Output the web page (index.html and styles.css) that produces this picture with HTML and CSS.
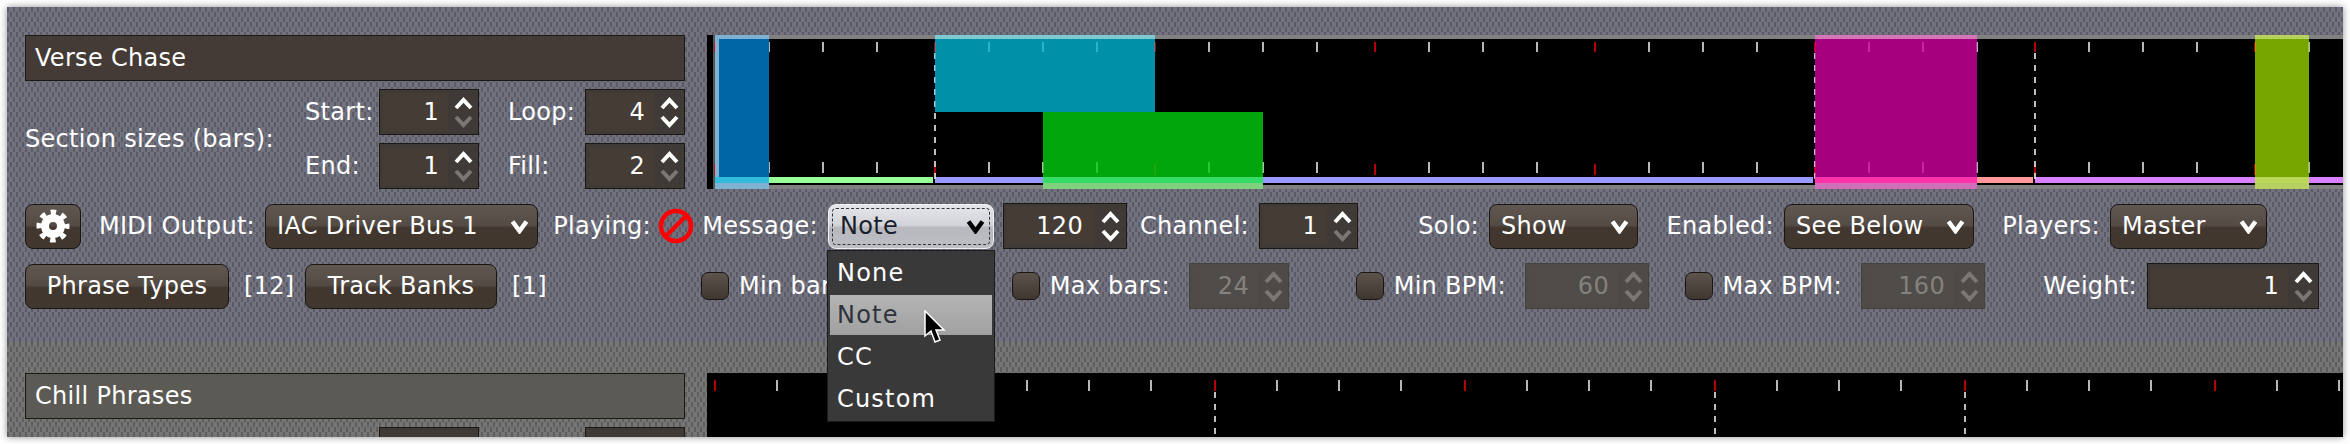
FILE: index.html
```html
<!DOCTYPE html>
<html lang="en">
<head>
<meta charset="utf-8">
<title>Show phrases</title>
<link rel="stylesheet" href="styles.css">
</head>
<body>
<svg class="defs" aria-hidden="true">
  <symbol id="up" viewBox="0 0 19 13"><polyline points="2,11 9.5,3 17,11"/></symbol>
  <symbol id="down" viewBox="0 0 19 13"><polyline points="2,2 9.5,10 17,2"/></symbol>
  <symbol id="drop" viewBox="0 0 19 15"><polyline points="2.5,2.5 9.5,12 16.5,2.5"/></symbol>
</svg>
<main class="window">
  <section class="panel panel-blue">
    <div class="top">
      <div class="side">
        <div class="name">Verse Chase</div>
        <div class="sizes">
          <span class="label">Section sizes (bars):</span>
          <div class="size-grid">
            <span class="label size-label">Start:</span>
            <div class="spin"><span class="value">1</span><span class="arrows"><svg class="arrow"><use href="#up"/></svg><svg class="arrow dim"><use href="#down"/></svg></span></div>
            <span class="label size-label">Loop:</span>
            <div class="spin"><span class="value">4</span><span class="arrows"><svg class="arrow"><use href="#up"/></svg><svg class="arrow"><use href="#down"/></svg></span></div>
            <span class="label size-label">End:</span>
            <div class="spin"><span class="value">1</span><span class="arrows"><svg class="arrow"><use href="#up"/></svg><svg class="arrow dim"><use href="#down"/></svg></span></div>
            <span class="label size-label">Fill:</span>
            <div class="spin"><span class="value">2</span><span class="arrows"><svg class="arrow"><use href="#up"/></svg><svg class="arrow dim"><use href="#down"/></svg></span></div>
          </div>
        </div>
      </div>
      <svg class="timeline" viewBox="707 35 1636 154" aria-hidden="true">
        <rect x="707" y="35" width="1636" height="154" fill="#000"/>
        <rect x="713" y="35" width="1630" height="4" fill="#808080"/>
        <rect x="713" y="185" width="1630" height="4" fill="#808080"/>
        <rect x="713" y="35" width="2" height="154" fill="#555"/>
        <rect x="769" y="177" width="164" height="6" fill="#99ff99"/>
        <rect x="935" y="177" width="878" height="6" fill="#9999ff"/>
        <rect x="1815" y="177" width="218" height="6" fill="#ff9999"/>
        <rect x="2035" y="177" width="308" height="6" fill="#d980ff"/>
        <path class="tick" d="M769 42v10M823 42v10M877 42v10M989 42v10M1043 42v10M1097 42v10M1209 42v10M1263 42v10M1317 42v10M1429 42v10M1483 42v10M1537 42v10M1649 42v10M1703 42v10M1757 42v10M1869 42v10M1923 42v10M1977 42v10M2089 42v10M2143 42v10M2197 42v10M2309 42v10M769 162v11M823 162v11M877 162v11M989 162v11M1043 162v11M1097 162v11M1209 162v11M1263 162v11M1317 162v11M1429 162v11M1483 162v11M1537 162v11M1649 162v11M1703 162v11M1757 162v11M1869 162v11M1923 162v11M1977 162v11M2089 162v11M2143 162v11M2197 162v11M2309 162v11"/>
        <path class="tick red" d="M715 42v10M935 42v10M1155 42v10M1375 42v10M1595 42v10M1815 42v10M2035 42v10M2255 42v10M715 164v11M935 164v11M1155 164v11M1375 164v11M1595 164v11M1815 164v11M2035 164v11M2255 164v11"/>
        <path class="dash" d="M935 53V181M1815 53V181M2035 53V181"/>
        <rect x="715" y="35" width="54" height="154" fill="#7fb2d2"/>
        <rect x="719" y="39" width="50" height="138" fill="#0066a6"/>
        <rect x="715" y="177" width="54" height="6" fill="#33bbdd"/>
        <rect x="935" y="39" width="220" height="73" fill="#00b5d2" fill-opacity=".8"/>
        <rect x="935" y="35" width="220" height="4" fill="#7fc8d2"/>
        <rect x="1043" y="112" width="220" height="65" fill="#00d00f" fill-opacity=".8"/>
        <rect x="1043" y="177" width="220" height="6" fill="#33dd66"/>
        <rect x="1043" y="183" width="220" height="6" fill="#7fd07f"/>
        <rect x="1815" y="39" width="162" height="138" fill="#d0009e" fill-opacity=".8"/>
        <rect x="1815" y="35" width="162" height="4" fill="#d575b8"/>
        <rect x="1815" y="177" width="162" height="6" fill="#ff33aa"/>
        <rect x="1815" y="183" width="162" height="6" fill="#d070b8"/>
        <rect x="2255" y="39" width="54" height="138" fill="#94ce00" fill-opacity=".8"/>
        <rect x="2255" y="35" width="54" height="4" fill="#b8d060"/>
        <rect x="2255" y="177" width="54" height="6" fill="#bcd85a"/>
        <rect x="2255" y="183" width="54" height="6" fill="#b8d060"/>
      </svg>
    </div>
    <div class="row row-output">
      <button class="btn gear" type="button" aria-label="Settings">
        <svg width="34" height="34" viewBox="0 0 34 34"><circle cx="17" cy="17" r="8" class="gear-ring"/><circle cx="17" cy="17" r="13.5" class="gear-teeth"/></svg>
      </button>
      <div class="field"><span class="label">MIDI Output:</span><div class="select s-midi"><span>IAC Driver Bus 1</span><svg class="chev"><use href="#drop"/></svg></div></div>
      <div class="field"><span class="label">Playing:</span>
        <svg class="stop" width="36" height="36" viewBox="0 0 36 36"><circle cx="18" cy="18" r="15"/><path d="M8 28 28 8"/></svg>
      </div>
      <div class="field message"><span class="label">Message:</span>
        <div class="select s-focus"><span>Note</span><svg class="chev"><use href="#drop"/></svg></div>
        <ul class="popup">
          <li>None</li>
          <li class="on">Note</li>
          <li>CC</li>
          <li>Custom</li>
        </ul>
        <svg class="cursor" width="24" height="36" viewBox="0 0 24 36"><path d="M2 1V26L8 21 12 32 17 30 13 20H21Z"/></svg>
      </div>
      <div class="field"><div class="spin s-note"><span class="value">120</span><span class="arrows"><svg class="arrow"><use href="#up"/></svg><svg class="arrow"><use href="#down"/></svg></span></div></div>
      <div class="field"><span class="label">Channel:</span><div class="spin s-chan"><span class="value">1</span><span class="arrows"><svg class="arrow"><use href="#up"/></svg><svg class="arrow dim"><use href="#down"/></svg></span></div></div>
      <div class="field"><span class="label">Solo:</span><div class="select s-solo"><span>Show</span><svg class="chev"><use href="#drop"/></svg></div></div>
      <div class="field"><span class="label">Enabled:</span><div class="select s-enabled"><span>See Below</span><svg class="chev"><use href="#drop"/></svg></div></div>
      <div class="field"><span class="label">Players:</span><div class="select s-players"><span>Master</span><svg class="chev"><use href="#drop"/></svg></div></div>
    </div>
    <div class="row row-filters">
      <div class="group"><button class="btn b-types" type="button">Phrase Types</button><span class="label">[12]</span></div>
      <div class="group"><button class="btn b-banks" type="button">Track Banks</button><span class="label">[1]</span></div>
      <div class="field filter"><span class="check"></span><span class="label">Min bars:</span><div class="spin off s-min"><span class="value">1</span><span class="arrows"><svg class="arrow dim"><use href="#up"/></svg><svg class="arrow dim"><use href="#down"/></svg></span></div></div>
      <div class="field filter"><span class="check"></span><span class="label">Max bars:</span><div class="spin off s-bars"><span class="value">24</span><span class="arrows"><svg class="arrow dim"><use href="#up"/></svg><svg class="arrow dim"><use href="#down"/></svg></span></div></div>
      <div class="field filter"><span class="check"></span><span class="label">Min BPM:</span><div class="spin off s-bpm"><span class="value">60</span><span class="arrows"><svg class="arrow dim"><use href="#up"/></svg><svg class="arrow dim"><use href="#down"/></svg></span></div></div>
      <div class="field filter"><span class="check"></span><span class="label">Max BPM:</span><div class="spin off s-bpm"><span class="value">160</span><span class="arrows"><svg class="arrow dim"><use href="#up"/></svg><svg class="arrow dim"><use href="#down"/></svg></span></div></div>
      <div class="field"><span class="label">Weight:</span><div class="spin s-weight"><span class="value">1</span><span class="arrows"><svg class="arrow"><use href="#up"/></svg><svg class="arrow dim"><use href="#down"/></svg></span></div></div>
    </div>
  </section>
  <section class="panel panel-grey">
    <div class="top">
      <div class="side">
        <div class="name name-off">Chill Phrases</div>
        <div class="sizes">
          <div class="size-grid size-grid-end">
            <div class="spin"><span class="arrows"><svg class="arrow"><use href="#up"/></svg></span></div>
            <div class="spin"><span class="arrows"><svg class="arrow"><use href="#up"/></svg></span></div>
          </div>
        </div>
      </div>
      <svg class="timeline timeline-short" viewBox="707 373 1636 64" aria-hidden="true">
        <rect x="707" y="373" width="1636" height="64" fill="#000"/>
        <path class="tick" d="M777 380v11M839 380v11M901 380v11M1027 380v11M1089 380v11M1151 380v11M1277 380v11M1339 380v11M1401 380v11M1527 380v11M1589 380v11M1651 380v11M1777 380v11M1839 380v11M1901 380v11M2027 380v11M2089 380v11M2151 380v11M2277 380v11M2339 380v11"/>
        <path class="tick red" d="M715 380v11M965 380v11M1215 380v11M1465 380v11M1715 380v11M1965 380v11M2215 380v11"/>
        <path class="dash" d="M1215 392V437M1715 392V437M1965 392V437"/>
      </svg>
    </div>
  </section>
</main>
</body>
</html>
```
FILE: styles.css
```css
* { box-sizing: border-box; }

html, body {
  margin: 0;
  height: 100%;
  background: #fff;
  overflow: hidden;
}

body {
  font-family: "DejaVu Sans", sans-serif;
  font-size: 24px;
  letter-spacing: 0.3px;
  color: #fff;
}

.defs {
  position: absolute;
  width: 0;
  height: 0;
}

.window {
  margin: 7px 0 0 7px;
  width: 2336px;
  height: 430px;
  overflow: hidden;
  box-shadow: 0 0 7px rgba(0, 0, 0, 0.45);
}

.panel {
  padding-left: 18px;
  background-position: 0 0, 3px 5px;
  background-size: 6px 10px;
}

.panel-blue {
  height: 335px;
  padding-top: 28px;
  background-color: #72727f;
  background-image:
    conic-gradient(at 2px 5px, transparent 75%, #5b5b67 0),
    conic-gradient(at 2px 5px, transparent 75%, #5b5b67 0);
}

.panel-grey {
  height: 95px;
  padding-top: 31px;
  background-color: #757575;
  background-image:
    conic-gradient(at 2px 5px, transparent 75%, #5e5e5e 0),
    conic-gradient(at 2px 5px, transparent 75%, #5e5e5e 0);
}

.top {
  display: grid;
  grid-template-columns: 660px 1636px;
  column-gap: 22px;
  align-items: start;
}

.timeline {
  display: block;
  width: 1636px;
  height: 154px;
}

.timeline-short {
  height: 64px;
}

.tick {
  fill: none;
  stroke: #e4e4e4;
  stroke-width: 1.6;
}

.tick.red {
  stroke: #e00000;
}

.dash {
  fill: none;
  stroke: #eee;
  stroke-width: 1.6;
  stroke-dasharray: 6 6;
}

.name {
  height: 46px;
  display: flex;
  align-items: center;
  padding-left: 9px;
  background: #443b36;
  border: 1px solid #1c1815;
}

.name-off {
  background: #5c5a55;
}

.sizes {
  display: flex;
  justify-content: space-between;
  align-items: center;
  margin-top: 8px;
}

.size-grid {
  display: grid;
  grid-template-columns: 74px 100px 106px 100px;
  grid-auto-rows: 46px;
  row-gap: 8px;
  align-items: center;
}

.size-grid-end {
  width: 380px;
  margin-left: auto;
  grid-template-columns: 100px 100px;
  justify-content: space-between;
  padding-left: 74px;
  column-gap: 106px;
}

.size-label:nth-child(4n + 3) {
  padding-left: 29px;
}

.label {
  white-space: nowrap;
}

.spin {
  display: flex;
  height: 46px;
  width: 100px;
  padding: 3px 0 3px 3px;
  background: #3f3a35;
  border: 1px solid #1c1815;
}

.value {
  flex: 1;
  padding-right: 9px;
  text-align: right;
  line-height: 38px;
  background: #453c36;
}

.arrows {
  flex: none;
  width: 30px;
  display: flex;
  flex-direction: column;
  align-items: center;
  justify-content: center;
  gap: 5px;
}

.arrow {
  width: 19px;
  height: 13px;
  fill: none;
  stroke: #fff;
  stroke-width: 4;
}

.arrow.dim {
  stroke: #7c7772;
}

.spin.off {
  background: #4d4a47;
  border-color: #44413e;
  color: #85817d;
}

.spin.off .value {
  background: #504c49;
}

.row {
  display: grid;
  height: 46px;
  align-items: center;
}

.row-output {
  margin-top: 14px;
  grid-template-columns: 56px 457px 156px 300px 133px 231px 280px 336px 293px;
}

.row-filters {
  margin-top: 14px;
  grid-template-columns: 280px 396px 278px 310px 360px 336px 334px;
}

.field {
  display: flex;
  justify-content: flex-end;
  align-items: center;
  gap: 10px;
}

.filter .label {
  margin-right: 9px;
}

.group {
  display: flex;
  align-items: center;
  gap: 15px;
}

.btn,
.select {
  height: 45px;
  font: inherit;
  letter-spacing: inherit;
  color: #fff;
  border: 1px solid #1a1613;
  border-radius: 8px;
  background: linear-gradient(#5f5750, #544b45 47%, #41372f 53%, #41372f);
}

.gear {
  width: 56px;
  padding: 0;
  display: flex;
  align-items: center;
  justify-content: center;
}

.gear-ring {
  fill: none;
  stroke: #fff;
  stroke-width: 8;
}

.gear-teeth {
  fill: none;
  stroke: #fff;
  stroke-width: 6;
  stroke-dasharray: 5.3 5.3;
  stroke-dashoffset: 2.65;
}

.b-types { width: 204px; padding: 0; }
.b-banks { width: 192px; padding: 0; }

.select {
  display: flex;
  align-items: center;
  justify-content: space-between;
  padding: 0 8px 0 11px;
}

.chev {
  flex: none;
  width: 19px;
  height: 15px;
  fill: none;
  stroke: #fff;
  stroke-width: 4.5;
}

.s-midi { width: 273px; }
.s-solo { width: 149px; }
.s-enabled { width: 190px; }
.s-players { width: 157px; }

.s-focus {
  width: 166px;
  color: #1b1f2b;
  border-color: #f0f0f2;
  background: linear-gradient(#e4e6ea, #d2d4d9 47%, #b6b8be 53%, #bdbfc5);
  outline: 1px dashed #33343a;
  outline-offset: -5px;
}

.s-focus .chev {
  stroke: #000;
}

.s-note { width: 124px; }
.s-note .value { padding-right: 11px; }
.s-note .arrows { width: 32px; }
.s-chan { width: 99px; }
.s-bars { width: 100px; }
.s-min { width: 109px; }
.s-bpm { width: 124px; }
.s-weight { width: 172px; }

.check {
  flex: none;
  width: 28px;
  height: 28px;
  border: 1px solid #1a1613;
  border-radius: 7px;
  background: linear-gradient(#5b534c, #40362f);
}

.stop {
  flex: none;
  margin-left: -3px;
  fill: none;
  stroke: #f00;
  stroke-width: 4.5;
}

.message {
  position: relative;
}

.popup {
  position: absolute;
  right: -1px;
  top: 46px;
  z-index: 2;
  width: 168px;
  margin: 0;
  padding: 2px;
  list-style: none;
  background: #393939;
  border: 1px solid #1c1c1c;
}

.popup li {
  height: 40px;
  line-height: 40px;
  padding-left: 7px;
  letter-spacing: 1.2px;
}

.popup li + li {
  margin-top: 2px;
}

.popup .on {
  color: #2e323c;
  background: linear-gradient(#b4b4b4, #a0a0a0);
}

.cursor {
  position: absolute;
  right: 47px;
  top: 106px;
  z-index: 3;
  fill: #000;
  stroke: #fff;
  stroke-width: 1.5;
}
```
